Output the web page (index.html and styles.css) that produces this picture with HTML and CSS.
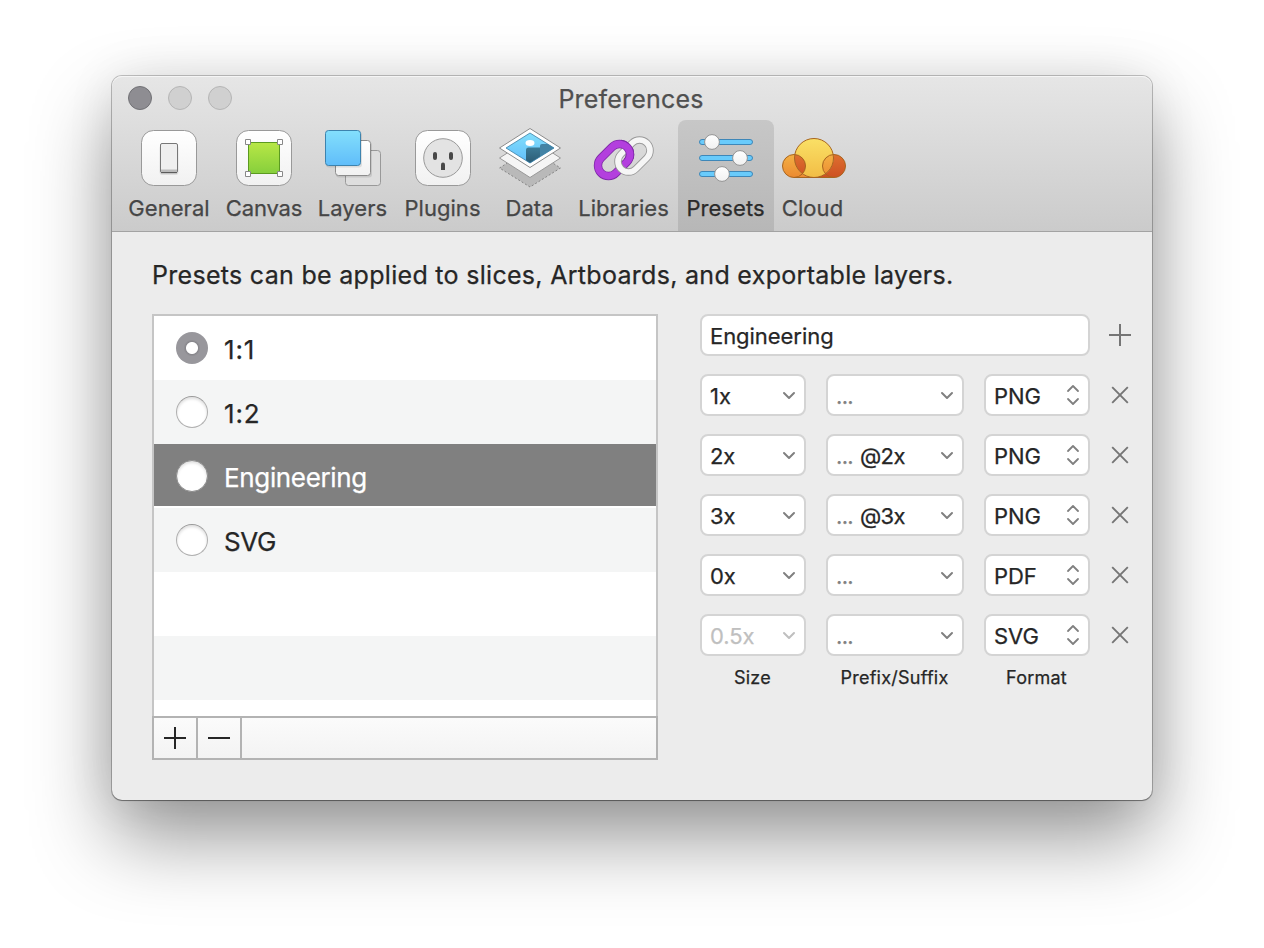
FILE: index.html
```
<!DOCTYPE html>
<html lang="en">
<head>
<meta charset="utf-8">
<title>Preferences</title>
<link rel="stylesheet" href="styles.css">
</head>
<body>
<svg class="defs" width="0" height="0" aria-hidden="true">
  <defs>
    <linearGradient id="white" x1="0" y1="0" x2="0" y2="1"><stop offset="0" stop-color="#fff"/><stop offset="1" stop-color="#f1f1f1"/></linearGradient>
    <linearGradient id="green" x1="0" y1="0" x2="0" y2="1"><stop offset="0" stop-color="#b8e746"/><stop offset="1" stop-color="#86cf3c"/></linearGradient>
    <linearGradient id="blue" x1="0" y1="0" x2="0" y2="1"><stop offset="0" stop-color="#83dffc"/><stop offset="1" stop-color="#60bdfa"/></linearGradient>
    <linearGradient id="dusk" x1="0" y1="0" x2="0" y2="1"><stop offset="0" stop-color="#3c7a96"/><stop offset="1" stop-color="#28566e"/></linearGradient>
    <linearGradient id="sun" x1="0" y1="0" x2="0" y2="1"><stop offset="0" stop-color="#fae066"/><stop offset="1" stop-color="#f2bd45"/></linearGradient>
    <linearGradient id="orange" x1="0" y1="0" x2="0" y2="1"><stop offset="0" stop-color="#f3b044"/><stop offset="1" stop-color="#ec8a31"/></linearGradient>
    <linearGradient id="rust" x1="0" y1="0" x2="0" y2="1"><stop offset="0" stop-color="#de7030"/><stop offset="1" stop-color="#cd5022"/></linearGradient>
    <symbol id="down" viewBox="0 0 14 9"><path d="M2 2l5 5 5-5" fill="none" stroke="currentColor" stroke-width="2" stroke-linecap="round" stroke-linejoin="round"/></symbol>
    <symbol id="stepper" viewBox="0 0 14 22"><path d="M2 7l5-5 5 5M2 15l5 5 5-5" fill="none" stroke="currentColor" stroke-width="1.8" stroke-linecap="round" stroke-linejoin="round"/></symbol>
    <symbol id="cross" viewBox="0 0 24 24"><path d="M4.200 4.200l15.600 15.600M19.800 4.200l-15.600 15.600" fill="none" stroke="currentColor" stroke-width="1.900"/></symbol>
    <symbol id="plus" viewBox="0 0 24 24"><path d="M12 1v22M1 12h22" fill="none" stroke="currentColor" stroke-width="2"/></symbol>
    <symbol id="minus" viewBox="0 0 24 24"><path d="M1 12h22" fill="none" stroke="currentColor" stroke-width="2"/></symbol>
  </defs>
</svg>
<main class="window">
  <header class="titlebar">
    <div class="title-row">
      <div class="lights"><i class="light close"></i><i class="light"></i><i class="light"></i></div>
      <h1 class="title">Preferences</h1>
    </div>
    <nav class="tools">
      <a class="tool general">
        <svg class="icon" viewBox="0 0 64 64"><rect x="4.500" y="4.500" width="55" height="55" rx="12" fill="url(#white)" stroke="#999"/><rect x="22.500" y="19" width="19" height="30" rx="3" fill="#000" opacity=".09"/><rect x="23.500" y="17.500" width="17" height="29" rx="1.500" fill="#efefef" stroke="#777"/><path d="M24 43.500h16v2.500h-16z" fill="#bbb"/><path d="M24 46.700h16" stroke="#555"/></svg>
        <span>General</span></a>
      <a class="tool canvas">
        <svg class="icon" viewBox="0 0 64 64"><rect x="4.500" y="4.500" width="55" height="55" rx="12" fill="url(#white)" stroke="#999"/><rect x="16.500" y="16.500" width="31" height="31" fill="url(#green)" stroke="#5b9a20"/><g fill="#fff" stroke="#888"><path d="M13.500 13.500h5v5h-5zM45.500 13.500h5v5h-5zM13.500 45.500h5v5h-5zM45.500 45.500h5v5h-5z"/></g></svg>
        <span>Canvas</span></a>
      <a class="tool layers">
        <svg class="icon" viewBox="0 0 64 64"><rect x="24.500" y="24.500" width="35" height="35" rx="3" fill="#dedede" stroke="#999"/><rect x="15" y="16" width="36" height="35.500" rx="3" opacity=".1"/><rect x="14.500" y="14.500" width="35" height="35" rx="3" fill="url(#white)" stroke="#8c8c8c"/><rect x="5" y="6" width="36" height="35.500" rx="3" opacity=".1"/><rect x="4.500" y="4.500" width="35" height="35" rx="3" fill="url(#blue)" stroke="#3d83ae"/></svg>
        <span>Layers</span></a>
      <a class="tool plugins">
        <svg class="icon" viewBox="0 0 64 64"><rect x="4.500" y="4.500" width="55" height="55" rx="12" fill="url(#white)" stroke="#999"/><circle cx="32" cy="32" r="19.300" fill="#e3e3e3" stroke="#999"/><path d="M24 28v4M40 28v4" stroke="#484848" stroke-width="4" stroke-linecap="round"/><path d="M30 44v-5.500a2 2 0 0 1 4 0V44z" fill="#484848"/></svg>
        <span>Plugins</span></a>
      <a class="tool data">
        <svg class="icon" viewBox="0 0 64 64"><path d="M32 22.500L62.500 42 32 61 1.500 42z" fill="#b9b9b9" stroke="#858585" stroke-dasharray="2 2"/><path d="M32 12.500L62.500 32 32 51.500 1.500 32z" fill="#f5f5f5" stroke="#999"/><path d="M32 2.500L62.500 22 32 41.500 1.500 22z" fill="#fff" stroke="#8c8c8c"/><clipPath id="photo"><path d="M32 7L56 22 32 37 8 22z"/></clipPath><g clip-path="url(#photo)"><path d="M8 7h48v30H8z" fill="url(#blue)"/><ellipse cx="32" cy="17" rx="4.500" ry="3" fill="#fff"/><path d="M42 30V20q0-2 2-2h12v14z" fill="#4383a5"/><path d="M28 40V24q0-2.500 2.500-2.500H42V40z" fill="url(#dusk)"/></g><path d="M32 7L56 22 32 37 8 22z" fill="none" stroke="#3c7fa4" stroke-width=".8"/></svg>
        <span>Data</span></a>
      <a class="tool libraries">
        <svg class="icon" viewBox="0 0 64 64"><defs><rect id="ring" x="-18.300" y="-10.500" width="36.600" height="21" rx="10.500" fill="none"/><clipPath id="over"><path d="M29 12h16v21H29z"/></clipPath><g id="plink"><use href="#ring" transform="translate(22 34) rotate(-45)" stroke="#7d2aa6" stroke-width="8.400"/><use href="#ring" transform="translate(22 34) rotate(-45)" stroke="#b33fde" stroke-width="6.800"/></g></defs><use href="#plink"/><use href="#ring" transform="translate(42 30) rotate(-45)" stroke="#999" stroke-width="7.500"/><use href="#ring" transform="translate(42 30) rotate(-45)" stroke="#f6f6f6" stroke-width="5.700"/><g clip-path="url(#over)"><use href="#plink"/></g></svg>
        <span>Libraries</span></a>
      <a class="tool presets selected">
        <svg class="icon" viewBox="0 0 64 64"><g fill="#69cbfb" stroke="#3e87b8"><rect x="5.500" y="13.500" width="53" height="5" rx="2.500"/><rect x="5.500" y="29.500" width="53" height="5" rx="2.500"/><rect x="5.500" y="45.500" width="53" height="5" rx="2.500"/></g><g fill="url(#white)" stroke="#929292"><circle cx="18" cy="16" r="7.400"/><circle cx="46" cy="32" r="7.400"/><circle cx="28" cy="48" r="7.400"/></g></svg>
        <span>Presets</span></a>
      <a class="tool cloud">
        <svg class="icon" viewBox="0 0 64 64"><clipPath id="sunclip"><circle cx="32" cy="32" r="19.500"/></clipPath><circle cx="32" cy="32" r="19.500" fill="url(#sun)"/><path d="M12 28.500a11.500 11.500 0 0 0 0 23h20a19.500 19.500 0 0 1-19.400-22z" fill="url(#orange)"/><path d="M52 28.500a11.500 11.500 0 0 1 0 23H32a19.500 19.500 0 0 0 19.400-22z" fill="url(#rust)"/><g clip-path="url(#sunclip)"><circle cx="12" cy="40" r="11.500" fill="url(#rust)"/><circle cx="52" cy="40" r="11.500" fill="url(#orange)"/></g><g fill="none" stroke="#a8651f"><circle cx="32" cy="32" r="19.500"/><circle cx="12" cy="40" r="11.500"/><circle cx="52" cy="40" r="11.500"/><path d="M12 51.500h40"/></g></svg>
        <span>Cloud</span></a>
    </nav>
  </header>
  <section class="content">
    <p class="intro">Presets can be applied to slices, Artboards, and exportable layers.</p>
    <div class="columns">
      <div class="list">
        <ul class="rows">
          <li class="row"><i class="radio on"></i><span class="ratio">1:1</span></li>
          <li class="row"><i class="radio"></i><span class="ratio">1:2</span></li>
          <li class="row current"><i class="radio"></i><span>Engineering</span></li>
          <li class="row"><i class="radio"></i><span>SVG</span></li>
          <li class="row"></li>
          <li class="row"></li>
        </ul>
        <div class="listbar">
          <span class="btn"><svg width="24" height="24"><use href="#plus"/></svg></span>
          <span class="btn"><svg width="24" height="24"><use href="#minus"/></svg></span>
        </div>
      </div>
      <div class="form">
        <div class="field name">Engineering</div>
        <svg class="act"><use href="#plus"/></svg>

        <div class="field">1x<svg class="chev"><use href="#down"/></svg></div>
        <div class="field"><span class="dots">...</span><svg class="chev"><use href="#down"/></svg></div>
        <div class="field">PNG<svg class="step"><use href="#stepper"/></svg></div>
        <svg class="act"><use href="#cross"/></svg>

        <div class="field">2x<svg class="chev"><use href="#down"/></svg></div>
        <div class="field"><span class="dots">...</span><span class="suffix">@2x</span><svg class="chev"><use href="#down"/></svg></div>
        <div class="field">PNG<svg class="step"><use href="#stepper"/></svg></div>
        <svg class="act"><use href="#cross"/></svg>

        <div class="field">3x<svg class="chev"><use href="#down"/></svg></div>
        <div class="field"><span class="dots">...</span><span class="suffix">@3x</span><svg class="chev"><use href="#down"/></svg></div>
        <div class="field">PNG<svg class="step"><use href="#stepper"/></svg></div>
        <svg class="act"><use href="#cross"/></svg>

        <div class="field">0x<svg class="chev"><use href="#down"/></svg></div>
        <div class="field"><span class="dots">...</span><svg class="chev"><use href="#down"/></svg></div>
        <div class="field">PDF<svg class="step"><use href="#stepper"/></svg></div>
        <svg class="act"><use href="#cross"/></svg>

        <div class="field empty">0.5x<svg class="chev"><use href="#down"/></svg></div>
        <div class="field"><span class="dots">...</span><svg class="chev"><use href="#down"/></svg></div>
        <div class="field">SVG<svg class="step"><use href="#stepper"/></svg></div>
        <svg class="act"><use href="#cross"/></svg>

        <span class="caption">Size</span><span class="caption">Prefix/Suffix</span><span class="caption">Format</span>
      </div>
    </div>
  </section>
</main>
</body>
</html>
```
FILE: styles.css
```
* { box-sizing: border-box; }
body {
  margin: 0;
  height: 948px;
  padding: 76px 112px 0;
  overflow: hidden;
  background: #fff;
  color: #262626;
  font-family: Inter, "Liberation Sans", sans-serif;
  -webkit-text-stroke: .25px currentColor;
}
.defs { position: absolute; }
.window {
  width: 1040px;
  height: 724px;
  border-radius: 10px;
  background: #ececec;
  box-shadow: 0 0 0 1px rgba(0, 0, 0, .22), 0 1px 1px rgba(0, 0, 0, .3), 0 0 50px rgba(0, 0, 0, .08), 0 38px 80px rgba(0, 0, 0, .41);
}
.titlebar {
  height: 156px;
  border-radius: 10px 10px 0 0;
  border-bottom: 1px solid #a3a3a3;
  background: linear-gradient(#e6e6e6, #cbcbcb);
  box-shadow: inset 0 1px 0 #f5f5f5;
}
.title-row {
  display: grid;
  grid-template-columns: 1fr auto 1fr;
  align-items: center;
  height: 44px;
  padding: 0 16px;
}
.lights { display: flex; gap: 16px; }
.light { width: 24px; height: 24px; border: 1px solid #b5b5b5; border-radius: 50%; background: #d0d0d0; }
.close { border-color: #717175; background: #8e8d92; }
.title { margin: 2px 2px 0 0; font-size: 25px; font-weight: 400; line-height: 32px; letter-spacing: .2px; color: #505050; }
.tools { display: flex; padding-left: 8px; }
.tool {
  display: flex;
  flex-direction: column;
  align-items: center;
  height: 111px;
  padding-top: 6px;
  border-radius: 8px 8px 0 0;
  font-size: 22px;
  line-height: 28px;
  color: #464646;
  letter-spacing: .05px;
}
.tool span { margin: 4px 0 0; white-space: nowrap; }
.icon { width: 64px; height: 64px; flex: none; }
.general { width: 98px; }
.canvas { width: 92px; letter-spacing: -.15px; }
.layers { width: 86px; }
.plugins { width: 94px; }
.tool.layers span, .tool.plugins span, .tool.libraries span, .tool.presets span { margin-right: 1px; }
.data { width: 80px; }
.tool.data span { margin-right: 1px; }
.libraries { width: 108px; }
.presets { width: 96px; }
.cloud { width: 80px; }
.tool.cloud span { margin-right: 3px; }
.selected { background: linear-gradient(#c7c7c7, #b7b7b7); color: #2b2b2b; }
.content { padding: 26px 18px 0 40px; }
.intro { margin: 0; font-size: 25px; line-height: 34px; letter-spacing: .3px; white-space: nowrap; }
.columns { display: flex; gap: 42px; margin-top: 22px; }
.list {
  display: flex;
  flex-direction: column;
  width: 506px;
  height: 446px;
  border: 2px solid #c5c5c5;
  border-bottom: 0;
  background: #fff;
}
.rows { flex: 1; margin: 0; padding: 0; list-style: none; }
.row {
  display: flex;
  gap: 16px;
  height: 64px;
  padding: 16px 0 0 22px;
  font-size: 26px;
  line-height: 36px;
  letter-spacing: -.35px;
}
.ratio { letter-spacing: .8px; }
.row:nth-child(even) { background: #f4f5f5; }
.current { border-bottom: 2px solid #fff; background: #808080; color: #fff; }
.radio {
  width: 32px;
  height: 32px;
  border: 1px solid #b0b0b0;
  border-top-color: #999;
  border-radius: 50%;
  background: #fff;
  box-shadow: inset 0 2px 3px rgba(0, 0, 0, .13);
}
.on { border: 0; background: radial-gradient(circle, #fff 5.500px, #88878c 6.500px, #98979c 8.500px); box-shadow: none; }
.current .radio { border-color: #8c8c8c; }
.listbar {
  display: flex;
  height: 44px;
  margin: 0 -2px;
  border: 2px solid #b3b3b3;
  background: linear-gradient(#fbfbfb, #f3f3f3);
}
.btn { display: flex; align-items: center; justify-content: center; width: 44px; border-right: 2px solid #b3b3b3; }
.form {
  display: grid;
  grid-template-columns: 106px 138px 106px 24px;
  grid-auto-rows: 42px;
  gap: 18px 20px;
  align-content: start;
}
.field {
  display: flex;
  align-items: center;
  padding: 2px 8px 0;
  border: 2px solid #d4d4d4;
  border-radius: 8px;
  background: #fff;
  font-size: 22px;
  line-height: 30px;
  letter-spacing: -.05px;
}
.name { grid-column: span 3; }
.act { width: 24px; height: 24px; margin: 9px 0 0 -2px; color: #757575; }
.chev { width: 14px; height: 9px; margin: -1px 0 0 auto; color: #808080; }
.step { width: 14px; height: 22px; margin: -2px 0 0 auto; color: #808080; }
.dots { color: #808080; letter-spacing: -.7px; }
.suffix { margin-left: 7px; letter-spacing: -.6px; }
.empty, .empty .chev { color: #bfbfbf; }
.caption { margin: -8px 1px 0 0; text-align: center; font-size: 18px; line-height: 24px; letter-spacing: .25px; white-space: nowrap; }
```
